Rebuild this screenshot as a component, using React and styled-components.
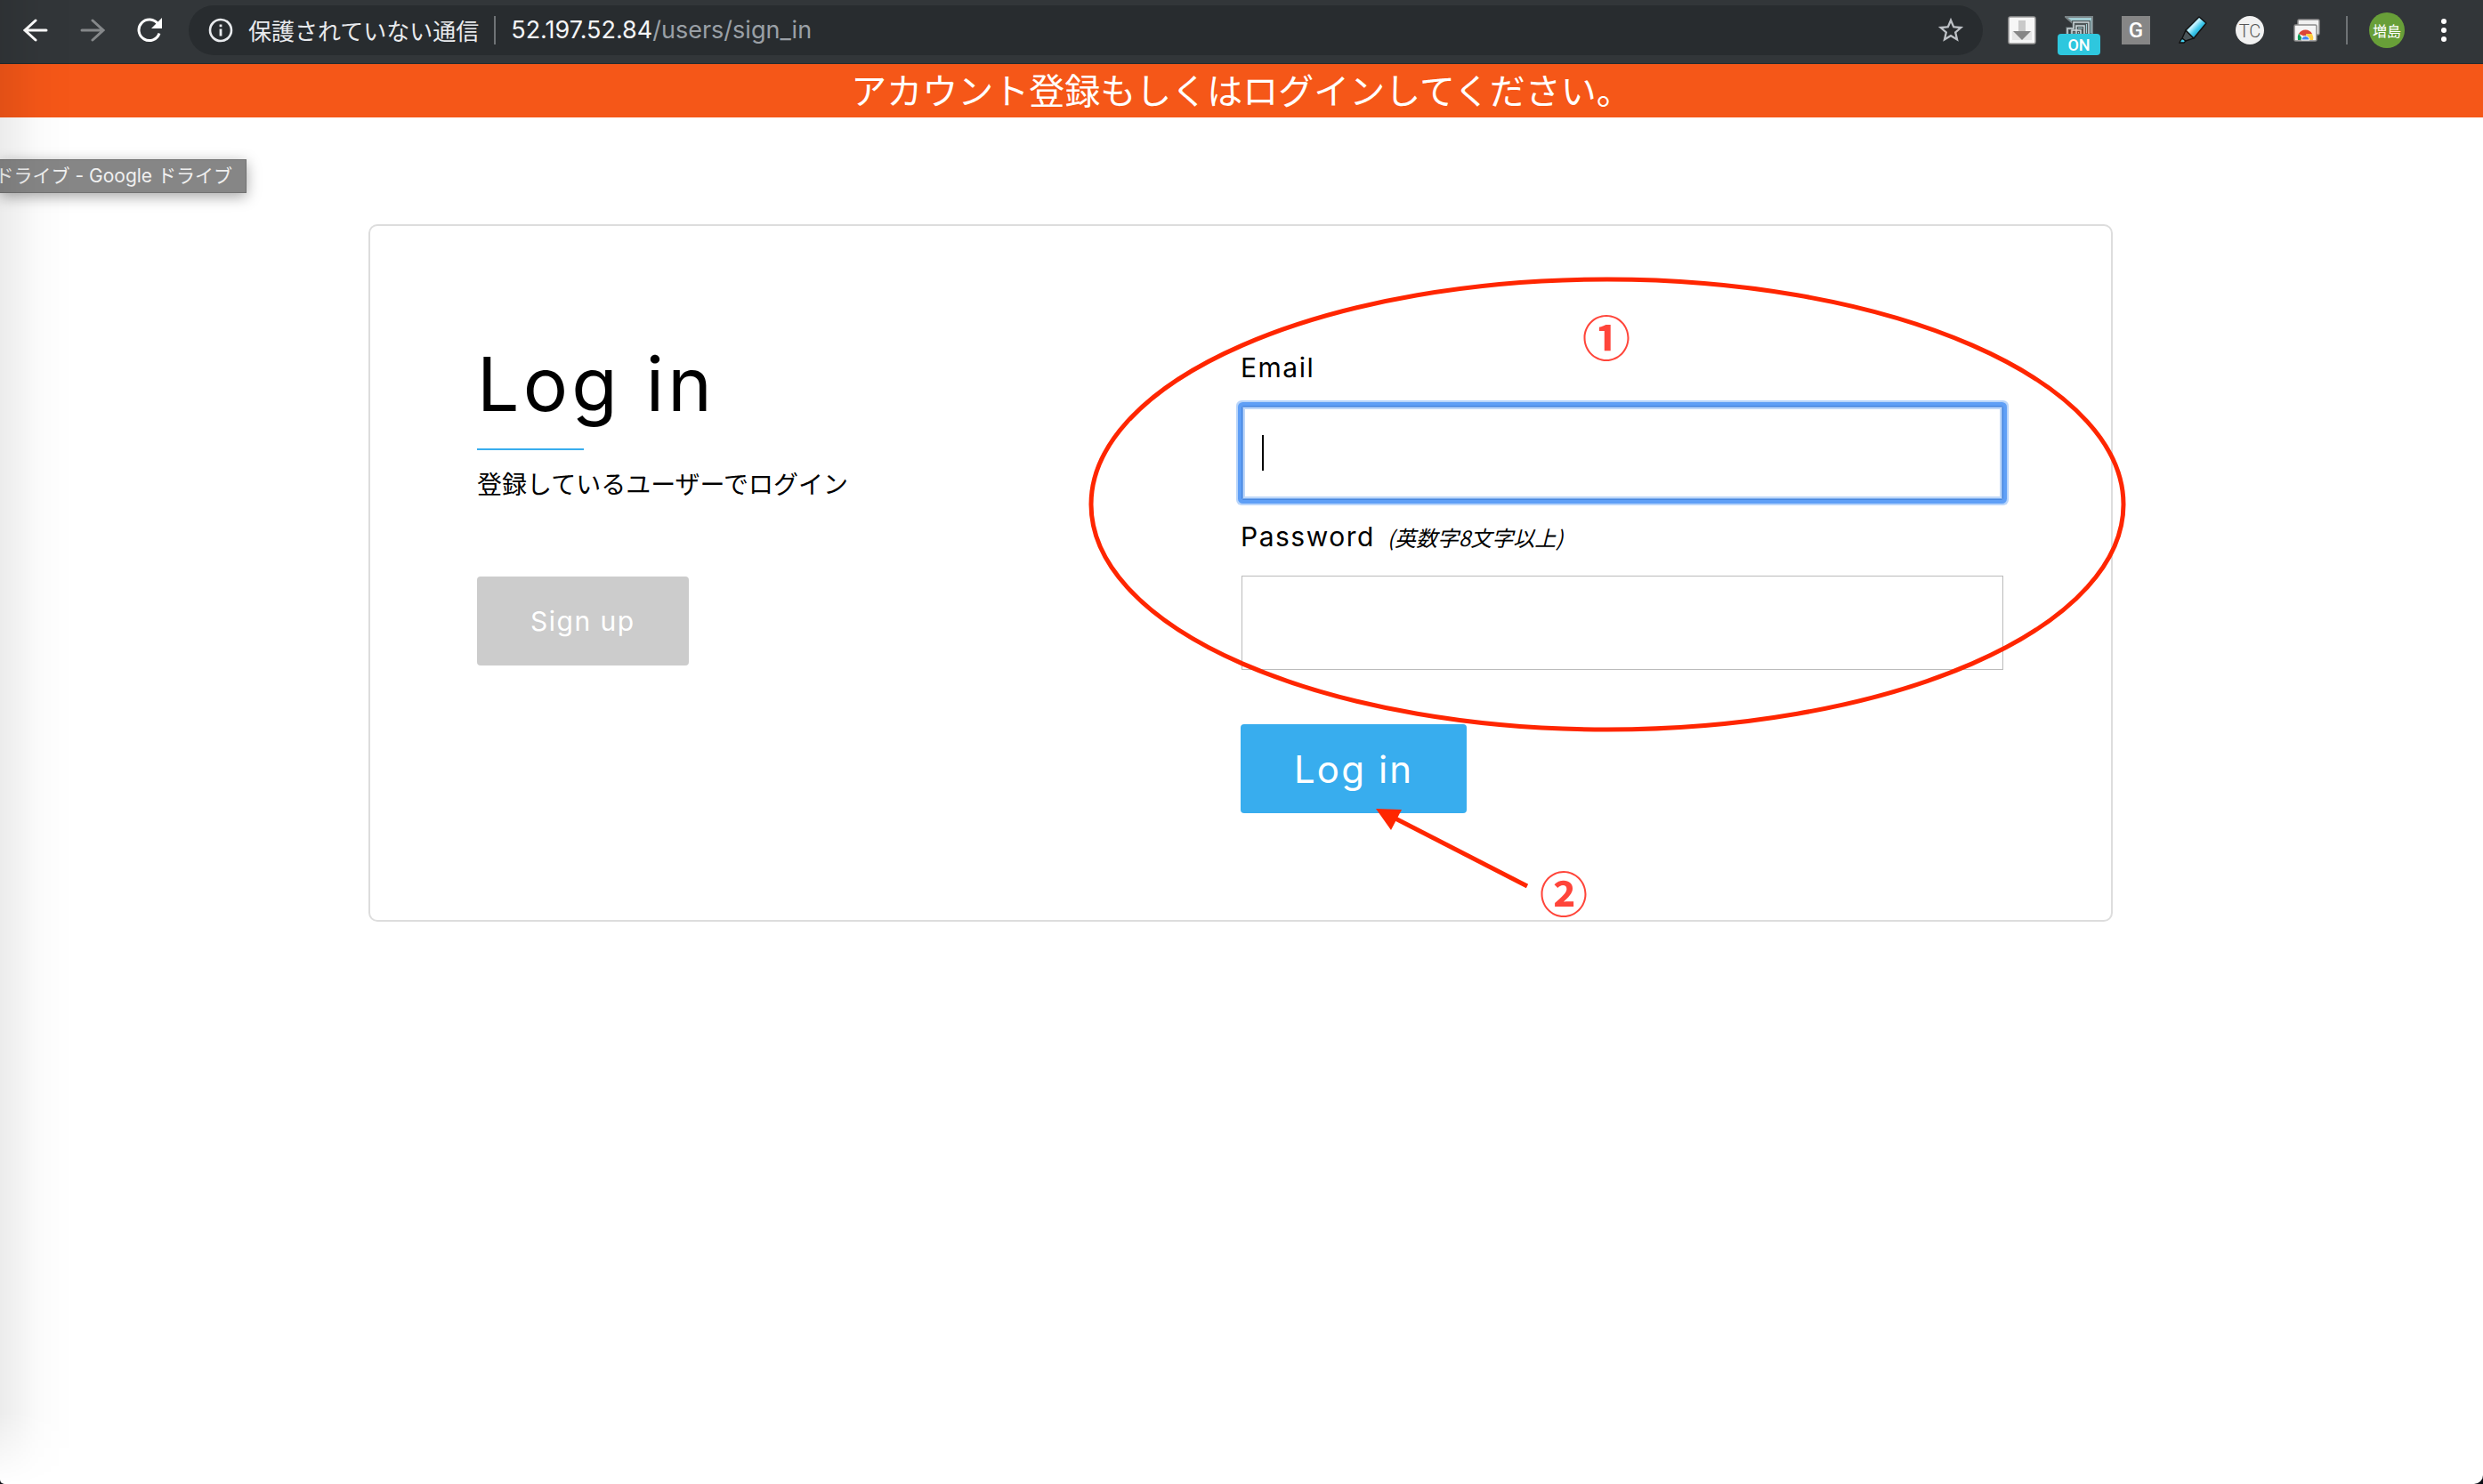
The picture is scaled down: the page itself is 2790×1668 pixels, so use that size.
import React from 'react';
import styled, { createGlobalStyle } from 'styled-components';

const jp = '"Noto Sans CJK JP", sans-serif';

const GlobalStyle = createGlobalStyle`
  *, *::before, *::after { box-sizing: border-box; }
  body { margin: 0; background: #0b0e14; color: #000; font-family: Inter, ${jp}; }
  button, input { font: inherit; }
`;

const Window = styled.div`
  position: relative;
  min-height: 100vh;
  overflow: hidden;
  background: #fff;
  border-radius: 0 0 10px 5px;
`;

const EdgeShade = styled.div`
  position: absolute;
  inset: 0 auto 0 0;
  width: 84px;
  pointer-events: none;
  background: linear-gradient(to right, rgba(0,0,0,.075), rgba(0,0,0,.05) 20px, rgba(0,0,0,.018) 40px, rgba(0,0,0,.006) 60px, transparent);
  mask-image: linear-gradient(to top, transparent, #000 80px);
`;

const Toolbar = styled.header`
  display: flex;
  align-items: center;
  height: 72px;
  padding: 0 24px 4px 20px;
  background: #323639;
  border-bottom: 1px solid #262a2c;
`;

const NavButtons = styled.nav`
  display: flex;
  gap: 24px;
  margin-right: 24px;
`;

const IconButton = styled.button`
  display: flex;
  align-items: center;
  justify-content: center;
  width: 40px;
  height: 40px;
  padding: 0;
  border: 0;
  background: none;
  color: ${p => p.$color || '#fff'};
`;

const AddressBar = styled.div`
  flex: 1;
  display: flex;
  align-items: center;
  height: 56px;
  padding: 0 16px 0 22px;
  border-radius: 28px;
  background: #282c2f;
  color: #e8eaed;
`;

const Security = styled.span`
  margin-left: 17px;
  font-size: 26px;
`;

const Divider = styled.span`
  width: 2px;
  height: 32px;
  margin: 0 ${p => p.$gap}px;
  background: #6f7376;
`;

const Url = styled.span`
  flex: 1;
  color: #9aa0a6;
  font-size: 27px;
  b { color: #f4f5f7; font-weight: 400; }
`;

const Extensions = styled.div`
  display: flex;
  align-items: center;
  gap: 24px;
  margin-left: 24px;
`;

const ExtButton = styled(IconButton)`
  position: relative;
`;

const Badge = styled.span`
  position: absolute;
  left: -4px;
  top: 24px;
  width: 48px;
  height: 24px;
  border-radius: 4px;
  background: #2ec7de;
  color: #fff;
  font: 500 18px/26px Roboto, sans-serif;
  text-align: center;
`;

const LetterTile = styled.span`
  width: 32px;
  height: 32px;
  background: #868686;
  color: #fff;
  font: 500 24px/32px Roboto, sans-serif;
  text-align: center;
`;

const LetterDisc = styled.span`
  width: 32px;
  height: 32px;
  border-radius: 50%;
  background: #f1f1f1;
  color: #555;
  font: 300 20px/34px Roboto, sans-serif;
  text-align: center;
`;

const Avatar = styled.button`
  width: 40px;
  height: 40px;
  margin-right: 24px;
  padding: 0;
  border: 0;
  border-radius: 50%;
  background: #689f38;
  color: #fff;
  font: 400 16px/40px ${jp};
`;

const Notice = styled.p`
  margin: 0;
  padding-bottom: 4px;
  background: #f55718;
  color: #fff;
  font: 400 40px/56px ${jp};
  text-align: center;
`;

const Tooltip = styled.div`
  position: absolute;
  left: 0;
  top: 179px;
  display: flex;
  justify-content: flex-end;
  width: 277px;
  height: 38px;
  padding-right: 15px;
  border: 1px solid #727272;
  border-left: 0;
  background: #868686;
  box-shadow: 0 4px 16px rgba(0,0,0,.35);
  color: #f0f0f0;
  font: 400 21px/36px Inter, ${jp};
  white-space: nowrap;
  overflow: hidden;
`;

const Main = styled.main`
  padding: 120px 416px 120px 414px;
`;

const Card = styled.section`
  display: grid;
  grid-template-columns: 1fr 1fr;
  padding: 120px;
  border: 2px solid #ddd;
  border-radius: 10px;
`;

const Intro = styled.div`
  display: flex;
  flex-direction: column;
  align-items: flex-start;
`;

const Title = styled.h1`
  margin: 0;
  font-size: 84px;
  font-weight: 400;
  line-height: 116px;
  letter-spacing: 0.05em;
`;

const Rule = styled.hr`
  width: 120px;
  height: 2px;
  margin: 14px 0 16px;
  border: 0;
  background: #38adee;
`;

const Lead = styled.p`
  margin: 0 0 84px;
  font: 400 28px/42px ${jp};
`;

const ActionButton = styled.button`
  height: 100px;
  padding: 0 60px;
  border: 0;
  border-radius: 4px;
  background: ${p => (p.$primary ? '#38adee' : '#ccc')};
  color: #fff;
  font-size: ${p => (p.$primary ? 42 : 30)}px;
  letter-spacing: 0.05em;
  white-space: nowrap;
`;

const Form = styled.form`
  position: relative;
  display: flex;
  flex-direction: column;
  align-items: flex-start;
  padding-top: 16px;
`;

const Field = styled.div`
  position: relative;
  width: 100%;
  padding: 0 1px;
  margin-bottom: ${p => (p.$last ? 61 : 18)}px;
`;

const Label = styled.label`
  display: block;
  margin: 0 -1px 20px;
  font-size: 30px;
  line-height: 46px;
  letter-spacing: 0.05em;
`;

const Hint = styled.em`
  margin-left: 4px;
  font: italic 400 24px/46px ${jp};
  letter-spacing: 0;
`;

const Input = styled.input`
  display: block;
  width: 100%;
  height: 106px;
  padding: 0 24px;
  border: 1px solid #bbb;
  border-radius: 0;
  background: #fff;
  font-size: 30px;
  outline: none;
  ${p => p.$active && `
    border-color: #4886dd;
    border-radius: 2px;
    box-shadow: 0 0 0 4px #5f9ff6, 0 0 0 6px #b9d5fa, inset 0 0 0 1px #75a9ef, inset 0 0 0 3px #c0d8f8;
  `}
`;

const Caret = styled.span`
  position: absolute;
  left: 24px;
  bottom: 33px;
  width: 2px;
  height: 40px;
  background: #000;
`;

const Markup = styled.svg`
  position: absolute;
  left: -194px;
  top: -74px;
  overflow: visible;
  pointer-events: none;
`;

const Step = styled.span`
  position: absolute;
  left: ${p => p.$x}px;
  top: ${p => p.$y}px;
  color: #ff453a;
  font: 700 54px/54px ${jp};
  pointer-events: none;
`;

function BackIcon({ flip }) {
  return (
    <svg width="28" height="28" viewBox="0 0 28 28" fill="none" stroke="currentColor" strokeWidth="3" strokeLinecap="round">
      <path d={flip ? 'M2 14H26M14 3L26 14L14 25' : 'M26 14H2M14 3L2 14L14 25'} />
    </svg>
  );
}

function ReloadIcon() {
  return (
    <svg width="28" height="28" viewBox="0 0 28 28">
      <path d="M25 17.5A11.8 11.8 0 1 1 23.5 7" fill="none" stroke="currentColor" strokeWidth="3" />
      <path d="M28 0V12H16Z" fill="currentColor" />
    </svg>
  );
}

function InfoIcon() {
  return (
    <svg width="28" height="28" viewBox="0 0 28 28">
      <circle cx="14" cy="14" r="12" fill="none" stroke="#e8eaed" strokeWidth="2.6" />
      <path d="M14 12.5V20.5M14 7.5V10.3" stroke="#e8eaed" strokeWidth="2.8" />
    </svg>
  );
}

function StarIcon() {
  return (
    <svg width="34" height="34" viewBox="0 0 24 24">
      <path fill="currentColor" d="M22 9.24l-7.19-.62L12 2 9.19 8.63 2 9.24l5.46 4.73L5.82 21 12 17.27 18.18 21l-1.63-7.03L22 9.24zM12 15.4l-3.76 2.27 1-4.28-3.32-2.88 4.38-.38L12 6.1l1.71 4.04 4.38.38-3.32 2.88 1 4.28L12 15.4z" />
    </svg>
  );
}

function DownloadTile() {
  return (
    <svg width="32" height="32" viewBox="0 0 32 32">
      <rect x="1" y="1" width="30" height="30" rx="2" fill="#f6f6f6" stroke="#9a9a9a" strokeWidth="1.5" />
      <path d="M5 17V27H27V17Z" fill="#e6e6e6" />
      <path d="M12 5h8v12h-8z" fill="#c9c9c9" />
      <path d="M6 17H26L16 27Z" fill="#868686" />
    </svg>
  );
}

function CastTile() {
  return (
    <svg width="32" height="32" viewBox="0 0 32 32">
      <path d="M1 1H31V20H10V9Z" fill="#a1cdd3" stroke="#7b8588" strokeWidth="2" />
      <path d="M3 20V14H10V7H27V20M8 20V16H13V11H22V20M13 20V16H18V20" fill="none" stroke="#4f5759" strokeWidth="4" />
      <path d="M3 20V14H10V7H27V20M8 20V16H13V11H22V20M13 20V16H18V20" fill="none" stroke="#cfdadd" strokeWidth="1.5" />
    </svg>
  );
}

function MarkerIcon() {
  return (
    <svg width="32" height="32" viewBox="0 0 32 32">
      <defs>
        <linearGradient id="ink" x1="0.2" y1="0.2" x2="0.8" y2="0.8">
          <stop offset="0" stopColor="#1ba7d6" />
          <stop offset="0.3" stopColor="#c9f3ff" />
          <stop offset="0.6" stopColor="#3fc9ec" />
          <stop offset="1" stopColor="#0a86b5" />
        </linearGradient>
      </defs>
      <path d="M1 30L3 26L6 25L8 28L6 30Z" fill="#43d3f3" stroke="#111" strokeWidth="1.4" />
      <path d="M4 25L8 16L17 25L8 28Z" fill="#4a5458" stroke="#111" strokeWidth="1.4" />
      <path d="M8 16L23 1L31 8L17 25Z" fill="url(#ink)" stroke="#111" strokeWidth="1.4" strokeLinejoin="round" />
    </svg>
  );
}

function WindowsIcon() {
  return (
    <svg width="32" height="32" viewBox="0 0 32 32">
      <rect x="6" y="4" width="24" height="17" rx="1.5" fill="#f0f0f0" stroke="#8b8b8b" strokeWidth="1.5" />
      <rect x="2" y="10" width="25" height="18" rx="1.5" fill="#f5f5f5" stroke="#8b8b8b" strokeWidth="1.5" />
      <path d="M7 20A8.500 8.500 0 0 1 22 20L14 23Z" fill="#db4437" />
      <path d="M7 19.5L12 27H6Q5 23 7 19.5Z" fill="#0f9d58" />
      <path d="M15 20H22Q24 24 23 27H16Z" fill="#ffcd40" />
      <path d="M10 27A4 4 0 1 1 19 27Z" fill="#4285f4" stroke="#fff" strokeWidth="1" />
    </svg>
  );
}

function MenuIcon() {
  return (
    <svg width="8" height="28" viewBox="0 0 8 28" fill="currentColor">
      <circle cx="4" cy="4" r="3" /><circle cx="4" cy="14" r="3" /><circle cx="4" cy="24" r="3" />
    </svg>
  );
}

export default function App() {
  return (
    <Window>
      <GlobalStyle />
      <Toolbar>
        <NavButtons>
          <IconButton type="button" aria-label="Back"><BackIcon /></IconButton>
          <IconButton type="button" aria-label="Forward" $color="#85888a"><BackIcon flip /></IconButton>
          <IconButton type="button" aria-label="Reload"><ReloadIcon /></IconButton>
        </NavButtons>
        <AddressBar>
          <InfoIcon />
          <Security>保護されていない通信</Security>
          <Divider $gap={17} />
          <Url><b>52.197.52.84</b>/users/sign_in</Url>
          <IconButton type="button" aria-label="Bookmark" $color="#bdc1c6"><StarIcon /></IconButton>
        </AddressBar>
        <Extensions>
          <ExtButton type="button" aria-label="Download"><DownloadTile /></ExtButton>
          <ExtButton type="button"><CastTile /><Badge>ON</Badge></ExtButton>
          <ExtButton type="button"><LetterTile>G</LetterTile></ExtButton>
          <ExtButton type="button" aria-label="Marker"><MarkerIcon /></ExtButton>
          <ExtButton type="button"><LetterDisc>TC</LetterDisc></ExtButton>
          <ExtButton type="button" aria-label="Windows"><WindowsIcon /></ExtButton>
        </Extensions>
        <Divider $gap={24} />
        <Avatar type="button">増島</Avatar>
        <IconButton type="button" aria-label="Menu"><MenuIcon /></IconButton>
      </Toolbar>
      <Notice>アカウント登録もしくはログインしてください。</Notice>
      <Main>
        <Card>
          <Intro>
            <Title>Log in</Title>
            <Rule />
            <Lead>登録しているユーザーでログイン</Lead>
            <ActionButton type="button">Sign up</ActionButton>
          </Intro>
          <Form onSubmit={e => e.preventDefault()}>
            <Field>
              <Label htmlFor="email">Email</Label>
              <Input id="email" type="email" $active />
              <Caret />
            </Field>
            <Field $last>
              <Label htmlFor="password">Password <Hint>(英数字8文字以上)</Hint></Label>
              <Input id="password" type="password" />
            </Field>
            <ActionButton type="submit" $primary>Log in</ActionButton>
            <Markup width="1200" height="720" viewBox="1200 300 1200 720" aria-hidden="true">
              <ellipse cx="1806" cy="567" rx="580" ry="253" fill="none" stroke="#ff2600" strokeWidth="5" />
              <path d="M1568 920L1716 996" stroke="#ff2600" strokeWidth="5" />
              <path d="M1546 909L1575 910L1563 933Z" fill="#ff2600" />
            </Markup>
            <Step $x={384} $y={-23}>①</Step>
            <Step $x={336} $y={602}>②</Step>
          </Form>
        </Card>
      </Main>
      <Tooltip>ドライブ - Google ドライブ</Tooltip>
      <EdgeShade />
    </Window>
  );
}
